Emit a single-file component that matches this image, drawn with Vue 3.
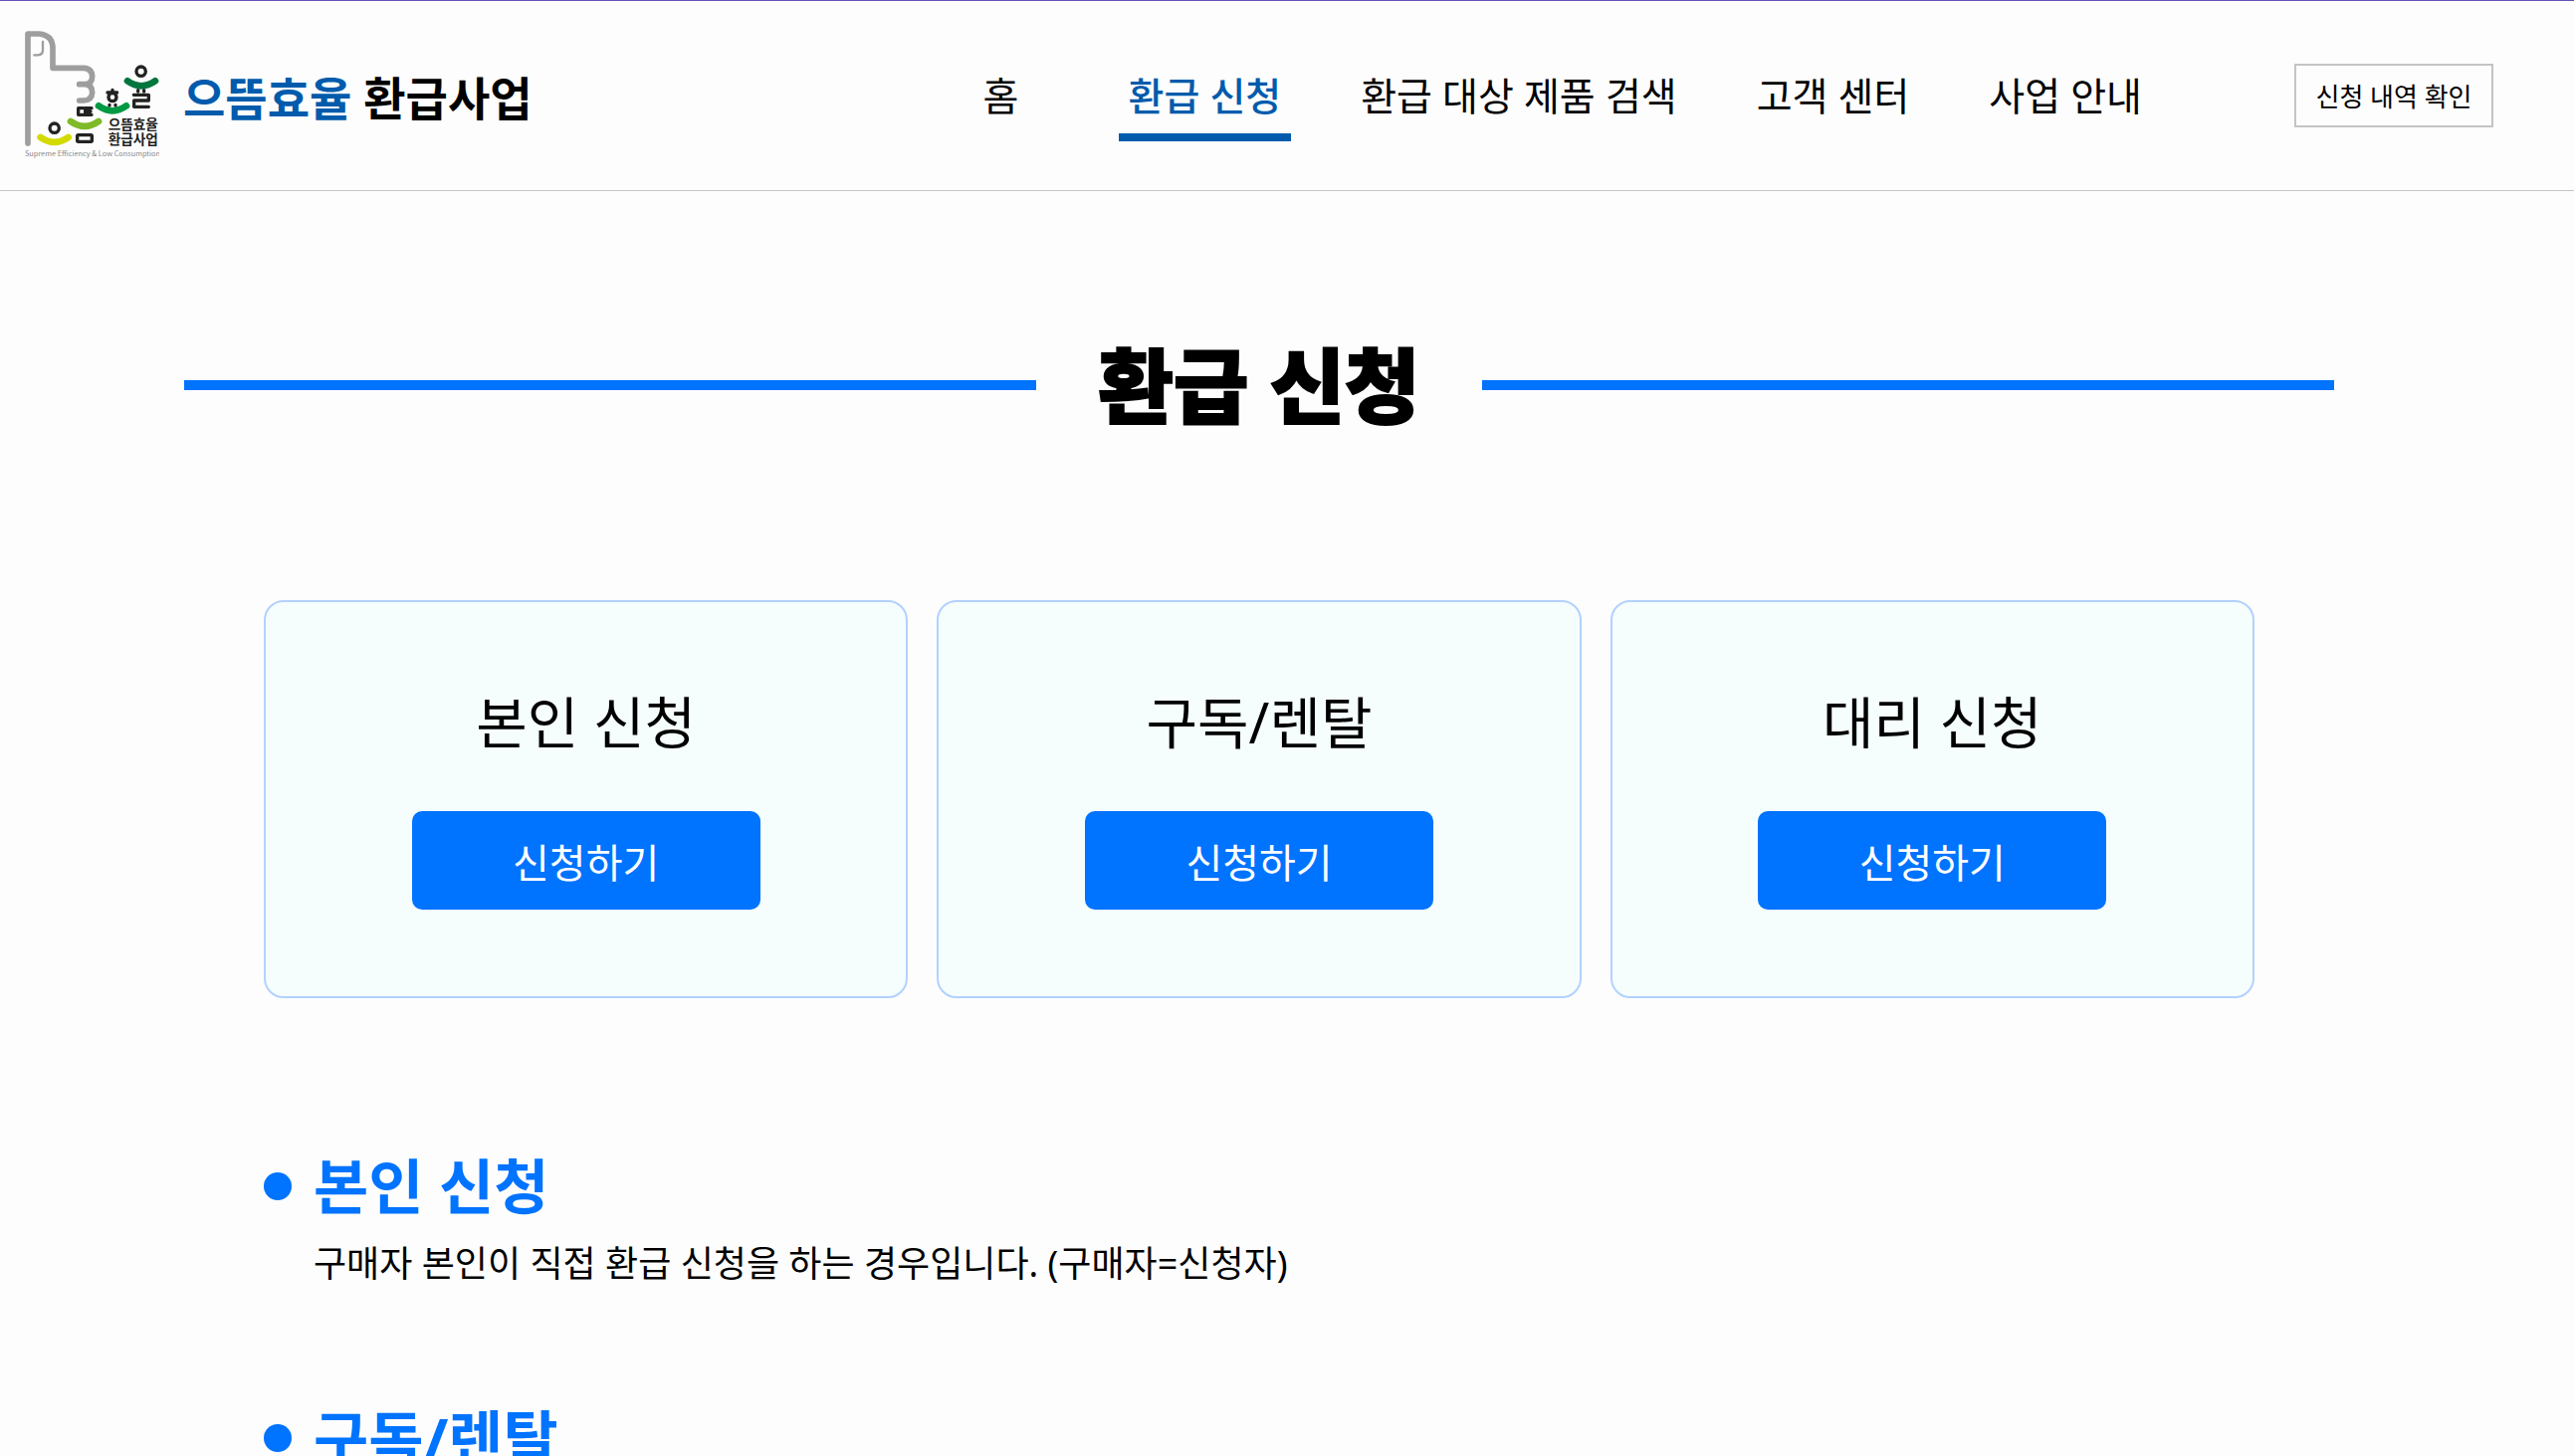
<template>
  <div class="page">
    <header class="header">
      <a href="#" class="brand">
        <svg class="logo" viewBox="75 93 405 390" role="img" aria-label="으뜸효율 환급사업">
          <!-- 손 모양 -->
          <g fill="none" stroke="#9e9e9e" stroke-linecap="round" stroke-linejoin="round">
            <path stroke-width="17" d="M84 432V102H118Q159 106 159 145V205H252Q278 207 278 231Q278 253 256 254H239H256Q278 256 278 279Q277 302 252 303H239" />
            <path stroke-width="7" d="M129 126V151Q129 166 114 166H103" />
          </g>
          <!-- 미소 -->
          <g fill="none" stroke-width="20" stroke-linecap="round">
            <path stroke="#d3da00" d="M122 414Q164 443 206 414" />
            <path stroke="#7fba28" d="M213 366Q255 395 297 366" />
            <path stroke="#009944" d="M297 319Q339 349 381 319" />
            <path stroke="#00763f" d="M384 244Q426 274 468 244" />
          </g>
          <g fill="none" stroke="#222221" stroke-width="10" stroke-linecap="round" stroke-linejoin="round">
            <circle cx="164" cy="386" r="14" />
            <path d="M252 326H236V346H276M276 326H257V344M257 336H273" />
            <rect x="233" y="407" width="44" height="20" rx="3" />
            <path d="M339 271V277M324 279H353" />
            <circle cx="339" cy="293" r="12" />
            <path d="M330 316V318M348 316V318" />
            <circle cx="425" cy="215" r="14" />
            <path d="M416 272V276M434 272V276" />
            <path d="M403 286H448V303H404V322H448" />
          </g>
          <text class="logo-name" x="326" y="389">으뜸효율</text>
          <text class="logo-name" x="326" y="436">환급사업</text>
          <text class="logo-sub" x="75" y="471">Supreme Efficiency &amp; Low Consumption</text>
        </svg>
        <span class="brand-name"><em>으뜸효율</em> 환급사업</span>
      </a>

      <nav class="nav">
        <a
          v-for="menu in menus"
          :key="menu"
          href="#"
          :class="['nav-item', { active: menu === activeMenu }]"
          @click.prevent="activeMenu = menu"
        >{{ menu }}</a>
      </nav>

      <button type="button" class="btn-check">신청 내역 확인</button>
    </header>

    <main class="content">
      <h1 class="title">환급 신청</h1>

      <div class="cards">
        <section v-for="card in cards" :key="card" class="card">
          <h2>{{ card }}</h2>
          <button type="button" class="btn-apply">신청하기</button>
        </section>
      </div>

      <ul class="guides">
        <li v-for="guide in guides" :key="guide.title">
          <h3>{{ guide.title }}</h3>
          <p v-if="guide.text">{{ guide.text }}</p>
        </li>
      </ul>
    </main>
  </div>
</template>

<script setup>
import { ref } from 'vue'

const menus = ['홈', '환급 신청', '환급 대상 제품 검색', '고객 센터', '사업 안내']
const activeMenu = ref('환급 신청')

const cards = ['본인 신청', '구독/렌탈', '대리 신청']

const guides = [
  { title: '본인 신청', text: '구매자 본인이 직접 환급 신청을 하는 경우입니다. (구매자=신청자)' },
  { title: '구독/렌탈' },
]
</script>

<style>
body {
  margin: 0;
  background: #fdfdfd;
}
</style>

<style scoped>
.page {
  font-family: "Noto Sans", "Noto Sans CJK KR", sans-serif;
  color: #000;
  border-top: 1px solid #6750b8;
}

.page * {
  box-sizing: border-box;
}

a {
  color: inherit;
  text-decoration: none;
}

button {
  font-family: inherit;
  cursor: pointer;
}

.header {
  display: flex;
  align-items: center;
  gap: 143px;
  min-height: 191px;
  padding: 0 81px 0 25px;
  border-bottom: 1px solid #c4c4c4;
}

.brand {
  display: flex;
  align-items: center;
  gap: 24px;
}

.logo {
  width: 135px;
  height: 130px;
}

.logo-name {
  font-size: 41px;
  font-weight: 700;
  fill: #222221;
}

.logo-sub {
  font-family: "Noto Sans CJK KR", sans-serif;
  font-size: 22px;
  fill: #8a8a8a;
}

.brand-name {
  font-size: 46px;
  font-weight: 700;
  white-space: nowrap;
}

.brand-name em {
  font-style: normal;
  color: #005bac;
}

.nav {
  display: flex;
  gap: 60px;
  margin-left: auto;
}

.nav-item {
  position: relative;
  min-width: 116px;
  padding: 0 10px;
  font-size: 39px;
  line-height: 60px;
  text-align: center;
  white-space: nowrap;
}

.nav-item.active {
  font-weight: 500;
  color: #005bac;
}

.nav-item.active::after {
  content: "";
  position: absolute;
  left: 0;
  right: 0;
  bottom: -16px;
  height: 8px;
  background: #005bac;
}

.btn-check {
  width: 200px;
  height: 64px;
  padding: 0;
  border: 2px solid #c4c4c4;
  background: transparent;
  color: #000;
  font-size: 26px;
  white-space: nowrap;
}

.content {
  max-width: 2216px;
  margin: 0 auto;
  padding: 145px 56px 0 0;
}

.title {
  display: flex;
  align-items: center;
  gap: 62px;
  margin: 0;
  font-size: 82px;
  font-weight: 900;
  line-height: 100px;
  white-space: nowrap;
  -webkit-text-stroke: 2px #000;
}

.title::before,
.title::after {
  content: "";
  flex: 1;
  height: 10px;
  background: #0073ff;
}

.cards {
  display: grid;
  grid-template-columns: repeat(3, 1fr);
  gap: 29px;
  margin-top: 166px;
  padding: 0 80px;
}

.card {
  display: flex;
  flex-direction: column;
  align-items: center;
  padding: 78px 20px 87px;
  border: 2px solid #b3d1ff;
  border-radius: 20px;
  background: #f5fefd;
}

.card h2 {
  margin: 0 0 48px;
  font-size: 56px;
  font-weight: 400;
  line-height: 84px;
}

.btn-apply {
  width: 350px;
  height: 99px;
  border: none;
  border-radius: 10px;
  background: #0073ff;
  color: #fff;
  font-size: 40px;
}

.guides {
  display: flex;
  flex-direction: column;
  gap: 108px;
  margin: 149px 0 0;
  padding: 0 80px;
  list-style: none;
}

.guides h3 {
  display: flex;
  align-items: center;
  gap: 22px;
  margin: 0;
  font-size: 60px;
  font-weight: 700;
  line-height: 80px;
  color: #0073ff;
}

.guides h3::before {
  content: "";
  width: 28px;
  height: 28px;
  border-radius: 50%;
  background: #0073ff;
}

.guides p {
  margin: 11px 0 0;
  padding-left: 50px;
  font-size: 36px;
  line-height: 54px;
}
</style>
